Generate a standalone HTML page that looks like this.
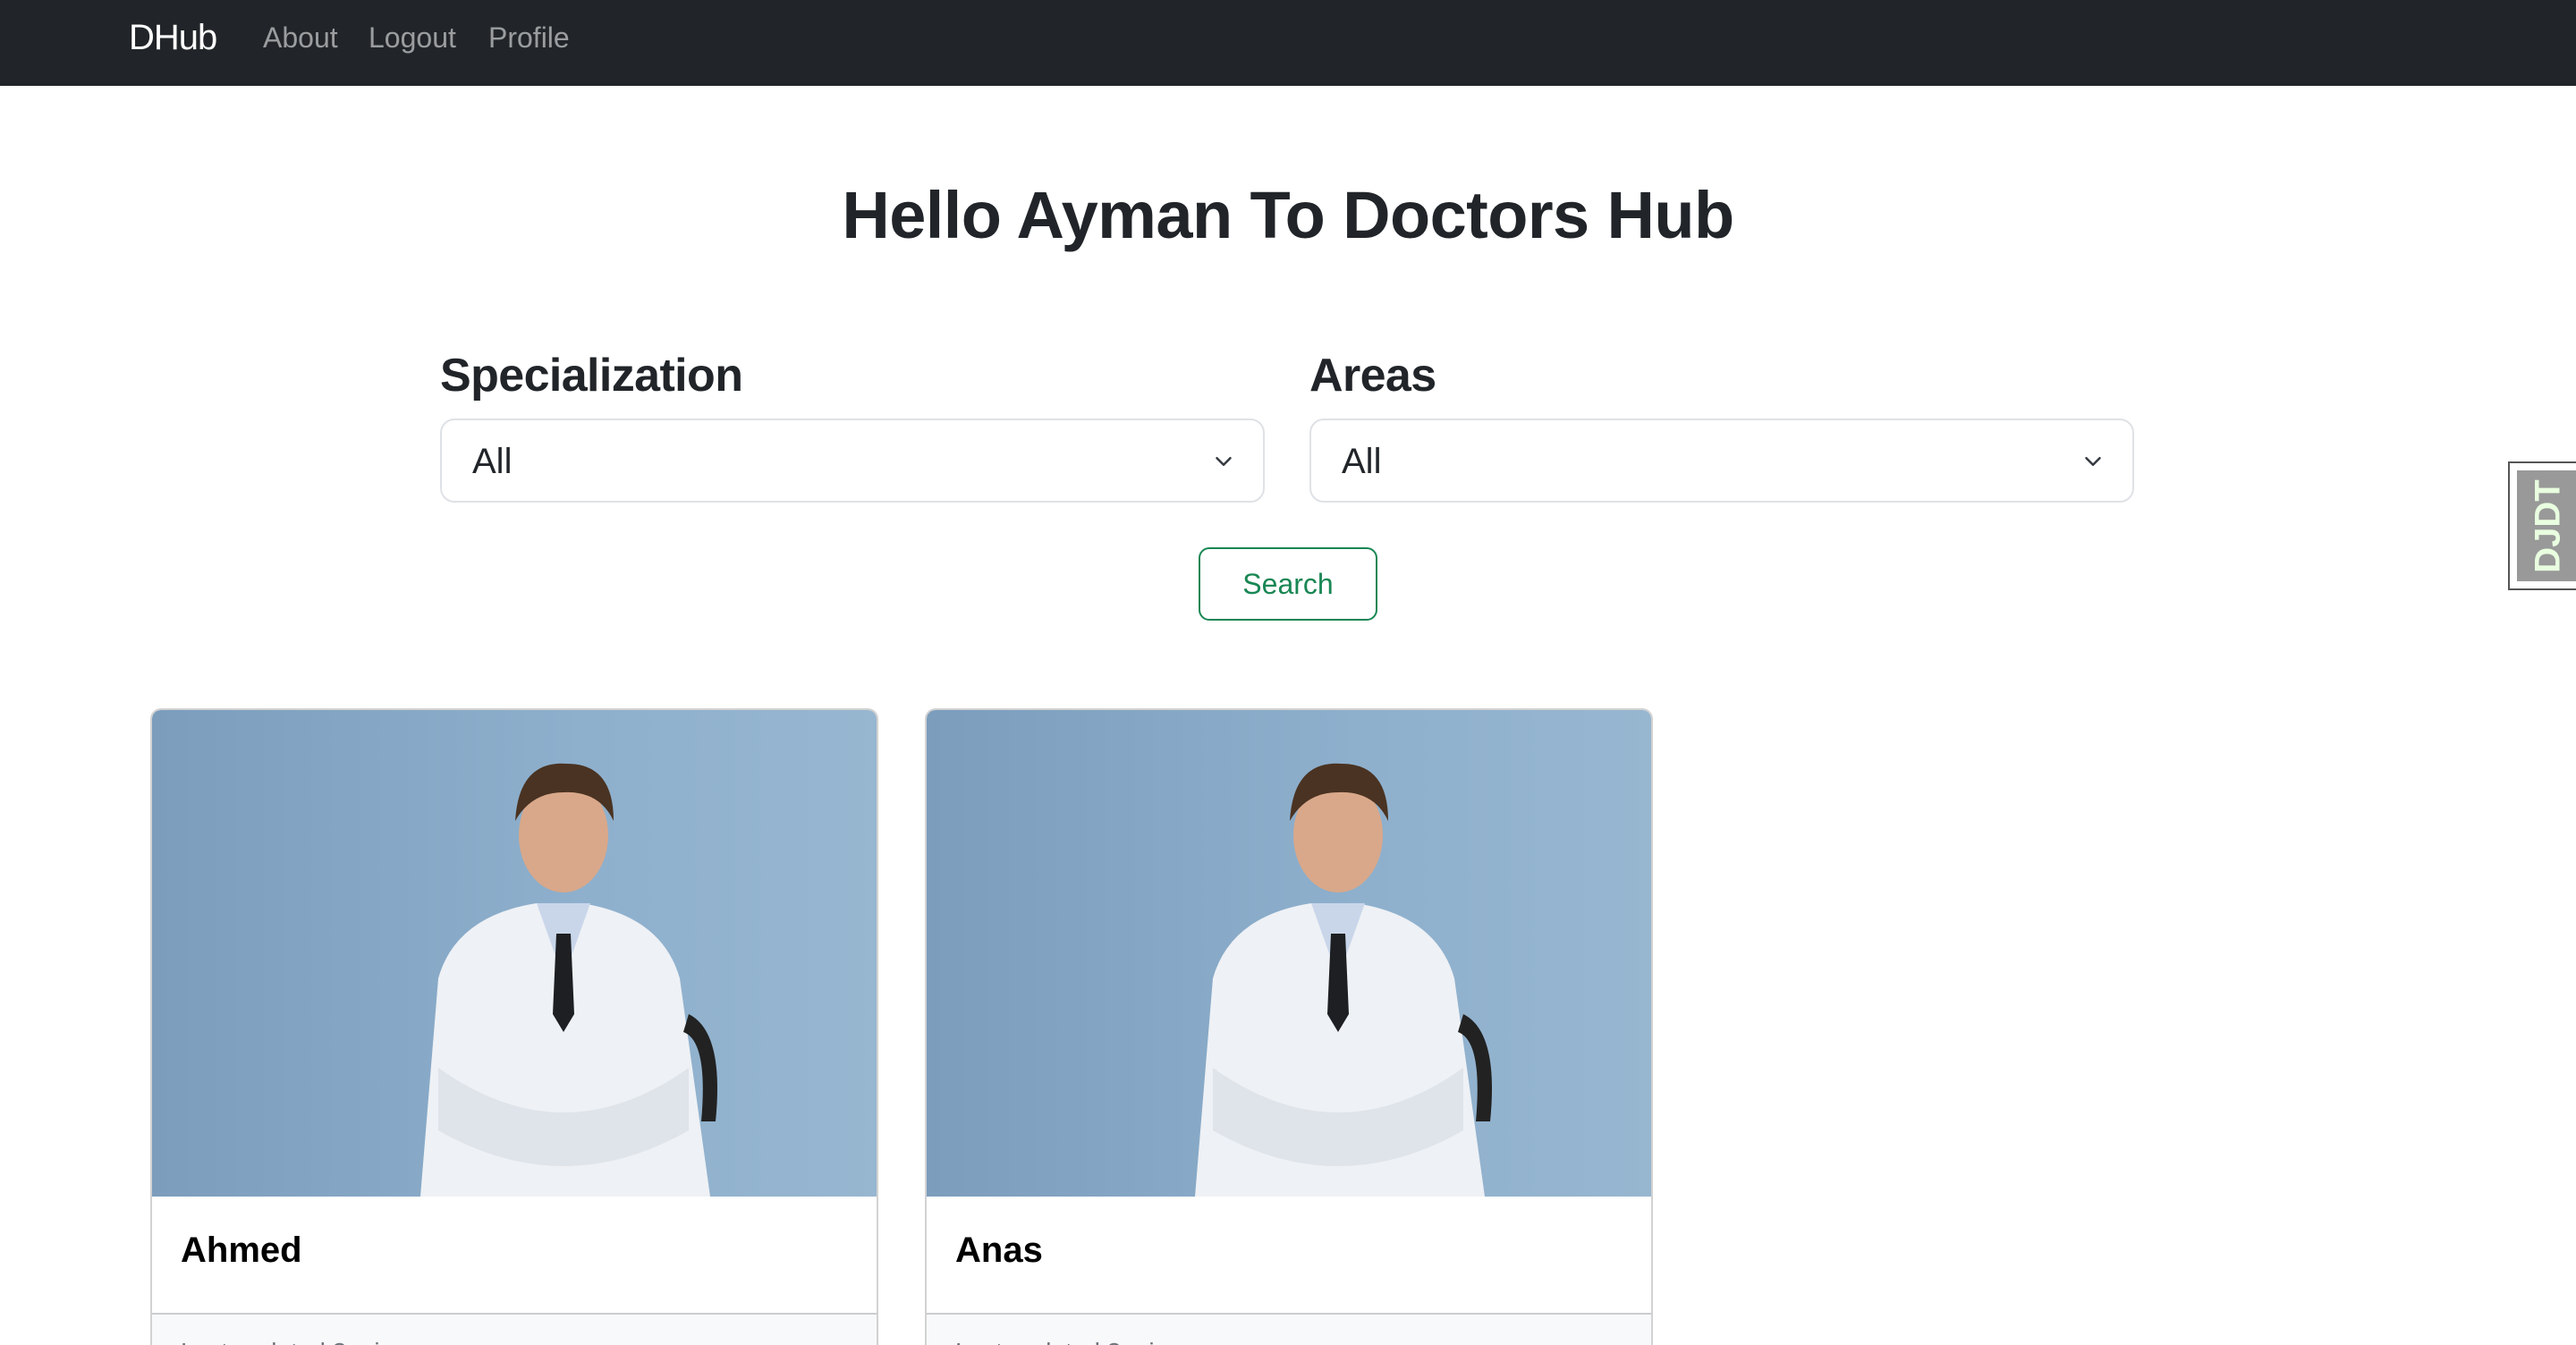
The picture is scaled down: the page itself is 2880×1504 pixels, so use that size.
<!DOCTYPE html>
<html><head><meta charset="utf-8"><style>
html{zoom:2;height:752px;overflow:hidden}
*{box-sizing:border-box;margin:0;padding:0}
body{width:1440px;height:752px;overflow:hidden;background:#fff;font-family:"Liberation Sans",sans-serif;color:#212529;position:relative}
.nav{height:48px;background:#212529;position:relative}
.nav span{position:absolute;top:12px;font-size:16px;color:rgba(255,255,255,.55)}
.nav .brand{font-size:20px;color:#fff;top:10px;left:72px;letter-spacing:-0.5px}
h1{position:absolute;top:99px;width:100%;text-align:center;font-size:37px;font-weight:bold;letter-spacing:-0.3px}
.lbl{position:absolute;top:195px;font-size:26px;font-weight:bold;letter-spacing:-0.3px}
.sel{position:absolute;top:234px;width:461px;height:47px;border:1px solid #dee2e6;border-radius:8px;font-size:20px;padding:12px 17px}
.sel svg{position:absolute;right:16px;top:18px}
.btn{position:absolute;left:670px;top:306px;width:100px;height:41px;border:1px solid #198754;border-radius:6px;color:#198754;font-size:16px;text-align:center;line-height:39px}
.card{position:absolute;top:396px;width:407px;height:380px;border:1px solid rgba(0,0,0,.175);border-radius:6px;overflow:hidden}
.card .img{height:272px;background:linear-gradient(90deg,#7c9dbc,#8eb0cd 60%,#97b6d0)}
.card .name{position:absolute;top:291px;left:16px;font-size:20px;font-weight:bold;color:#000}
.card .foot{position:absolute;top:337px;left:0;right:0;bottom:0;background:#f8f9fa;border-top:1px solid rgba(0,0,0,.175);padding:13px 16px;font-size:14px;color:#6c757d}
.djdt{position:absolute;left:1402px;top:258px;width:40px;height:72px;border:1px solid #555;border-right:none;background:#fff;padding:4px 0 4px 4px}
.djdt div{background:#999;height:100%;display:flex;align-items:center;justify-content:center}
.djdt span{transform:rotate(-90deg);color:#e9ffe0;font-weight:bold;font-size:20px;white-space:nowrap}
</style></head><body>
<div class="nav"><span class="brand">DHub</span><span style="left:147px">About</span><span style="left:206px">Logout</span><span style="left:273px">Profile</span></div>
<h1>Hello Ayman To Doctors Hub</h1>
<div class="lbl" style="left:246px">Specialization</div>
<div class="lbl" style="left:732px">Areas</div>
<div class="sel" style="left:246px">All<svg width="12" height="10" viewBox="0 0 16 16"><path d="M2 5l6 6 6-6" fill="none" stroke="#343a40" stroke-width="2" stroke-linecap="round" stroke-linejoin="round"/></svg></div>
<div class="sel" style="left:732px">All<svg width="12" height="10" viewBox="0 0 16 16"><path d="M2 5l6 6 6-6" fill="none" stroke="#343a40" stroke-width="2" stroke-linecap="round" stroke-linejoin="round"/></svg></div>
<div class="btn">Search</div>
<div class="card" style="left:84px"><div class="img"><svg width="407" height="272" viewBox="0 0 407 272"><path d="M150 272 L160 150 Q170 115 215 108 L240 108 Q285 115 295 150 L312 272Z" fill="#eef1f5"/><path d="M215 108 L230 150 L245 108Z" fill="#c9d6ea"/><path d="M226 125 L234 125 L236 170 L230 180 L224 170Z" fill="#1d1f22"/><path d="M160 200 Q230 250 300 200 L300 235 Q230 275 160 235Z" fill="#dfe4ea"/><ellipse cx="230" cy="70" rx="25" ry="32" fill="#d9a88a"/><path d="M203 62 Q205 28 232 30 Q258 30 258 62 Q250 45 230 46 Q212 46 203 62Z" fill="#4a3322"/><path d="M300 170 q20 10 15 60 l-8 0 q4-45-10-50z" fill="#222"/></svg></div><div class="name">Ahmed</div><div class="foot">Last updated 3 mins ago</div></div>
<div class="card" style="left:517px"><div class="img"><svg width="407" height="272" viewBox="0 0 407 272"><path d="M150 272 L160 150 Q170 115 215 108 L240 108 Q285 115 295 150 L312 272Z" fill="#eef1f5"/><path d="M215 108 L230 150 L245 108Z" fill="#c9d6ea"/><path d="M226 125 L234 125 L236 170 L230 180 L224 170Z" fill="#1d1f22"/><path d="M160 200 Q230 250 300 200 L300 235 Q230 275 160 235Z" fill="#dfe4ea"/><ellipse cx="230" cy="70" rx="25" ry="32" fill="#d9a88a"/><path d="M203 62 Q205 28 232 30 Q258 30 258 62 Q250 45 230 46 Q212 46 203 62Z" fill="#4a3322"/><path d="M300 170 q20 10 15 60 l-8 0 q4-45-10-50z" fill="#222"/></svg></div><div class="name">Anas</div><div class="foot">Last updated 3 mins ago</div></div>
<div class="djdt"><div><span>DJDT</span></div></div>
</body></html>
